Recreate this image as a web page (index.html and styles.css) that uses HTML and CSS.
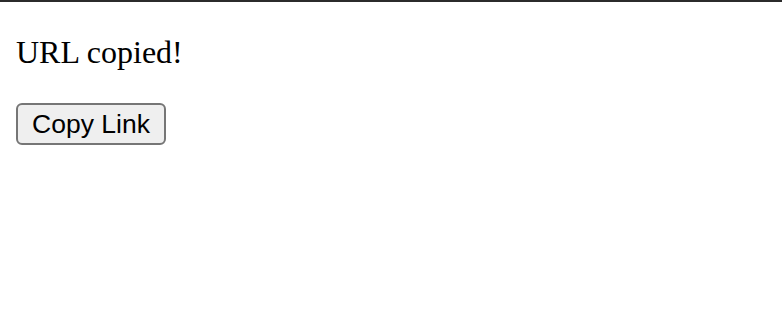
FILE: index.html
```html
<!DOCTYPE html>
<html>
<head>
<meta charset="utf-8">
<link rel="stylesheet" href="styles.css">
</head>
<body>
<div class="topbar"></div>
<main class="page">
  <p class="status">URL copied!</p>
  <button class="copy-btn">Copy Link</button>
</main>
</body>
</html>
```
FILE: styles.css
```css
html, body {
  margin: 0;
  padding: 0;
  background: #ffffff;
}
.topbar {
  height: 2px;
  background: #2b2b2b;
}
.page {
  padding: 0 16px;
  display: flex;
  flex-direction: column;
  align-items: flex-start;
}
.status {
  margin: 32px 0 32px;
  font-family: "Liberation Serif", "Times New Roman", serif;
  font-size: 32px;
  line-height: 37px;
  color: #000;
}
.copy-btn {
  box-sizing: border-box;
  width: 150px;
  height: 42px;
  padding: 0 12px;
  font-family: "Liberation Sans", Arial, sans-serif;
  font-size: 26.5px;
  color: #000;
  background: #efefef;
  border: 2px solid #767676;
  border-radius: 6px;
}
```
